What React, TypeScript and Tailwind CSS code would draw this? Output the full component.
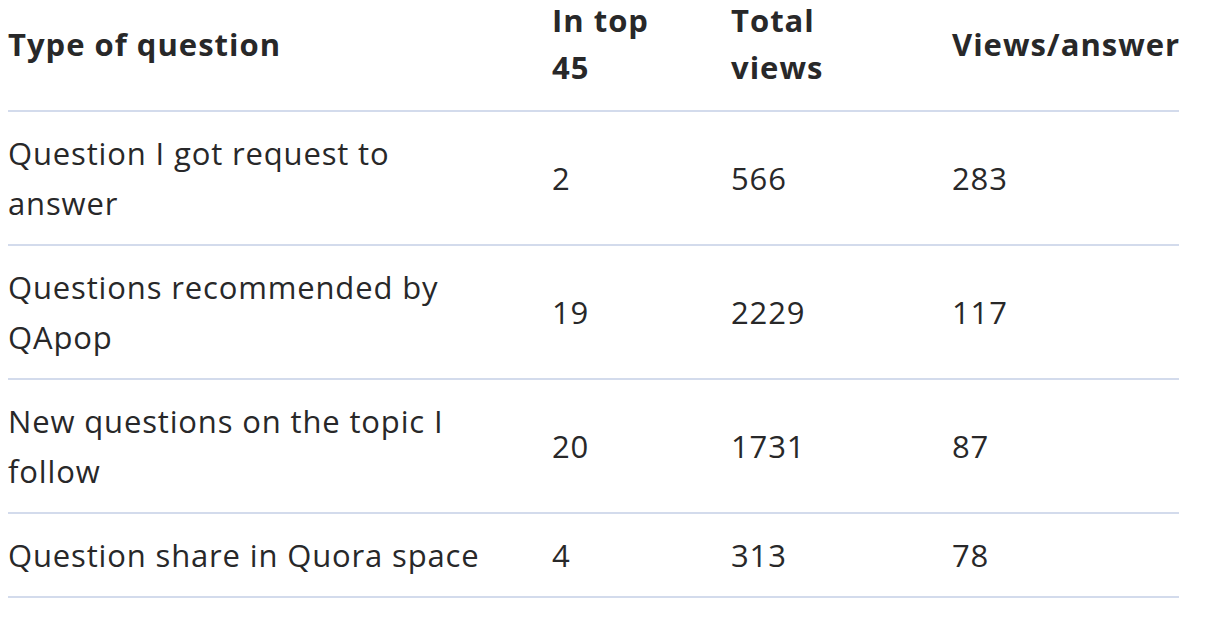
type Row = {
  type: string;
  top: string;
  views: string;
  perAnswer: string;
};

const rows: Row[] = [
  { type: 'Question I got request to answer', top: '2', views: '566', perAnswer: '283' },
  { type: 'Questions recommended by QApop', top: '19', views: '2229', perAnswer: '117' },
  { type: 'New questions on the topic I follow', top: '20', views: '1731', perAnswer: '87' },
  { type: 'Question share in Quora space', top: '4', views: '313', perAnswer: '78' },
];

export default function App() {
  return (
    <div className="min-h-screen bg-white pl-2 overflow-hidden text-[#282829]" style={{ fontFamily: '"Open Sans", "Liberation Sans", sans-serif' }}>
      <table className="table-fixed border-collapse w-[1171px] mt-[-17px] text-[31px] leading-[50px] tracking-[0.85px]">
        <colgroup>
          <col className="w-[544px]" />
          <col className="w-[179px]" />
          <col className="w-[221px]" />
          <col className="w-[227px]" />
        </colgroup>
        <thead>
          <tr className="border-b-2 border-[#d3dbec]">
            <th className="text-left align-middle font-bold tracking-[1px] pt-[14px] pb-[19px] pr-[56px] leading-[47px]">Type of question</th>
            <th className="text-left align-middle font-bold tracking-[1px] pt-[14px] pb-[19px] pr-[50px] leading-[47px]">In top 45</th>
            <th className="text-left align-middle font-bold tracking-[1px] pt-[14px] pb-[19px] pr-[70px] leading-[47px]">Total views</th>
            <th className="text-left align-middle font-bold tracking-[1px] pt-[14px] pb-[19px] leading-[47px] whitespace-nowrap">Views/answer</th>
          </tr>
        </thead>
        <tbody>
          {rows.map((r) => (
            <tr key={r.type} className="border-b-2 border-[#d3dbec]">
              <td className="align-middle py-[16px] pr-[56px]">{r.type}</td>
              <td className="align-middle py-[16px] pr-[50px]">{r.top}</td>
              <td className="align-middle py-[16px] pr-[70px]">{r.views}</td>
              <td className="align-middle py-[16px]">{r.perAnswer}</td>
            </tr>
          ))}
        </tbody>
      </table>
    </div>
  );
}
